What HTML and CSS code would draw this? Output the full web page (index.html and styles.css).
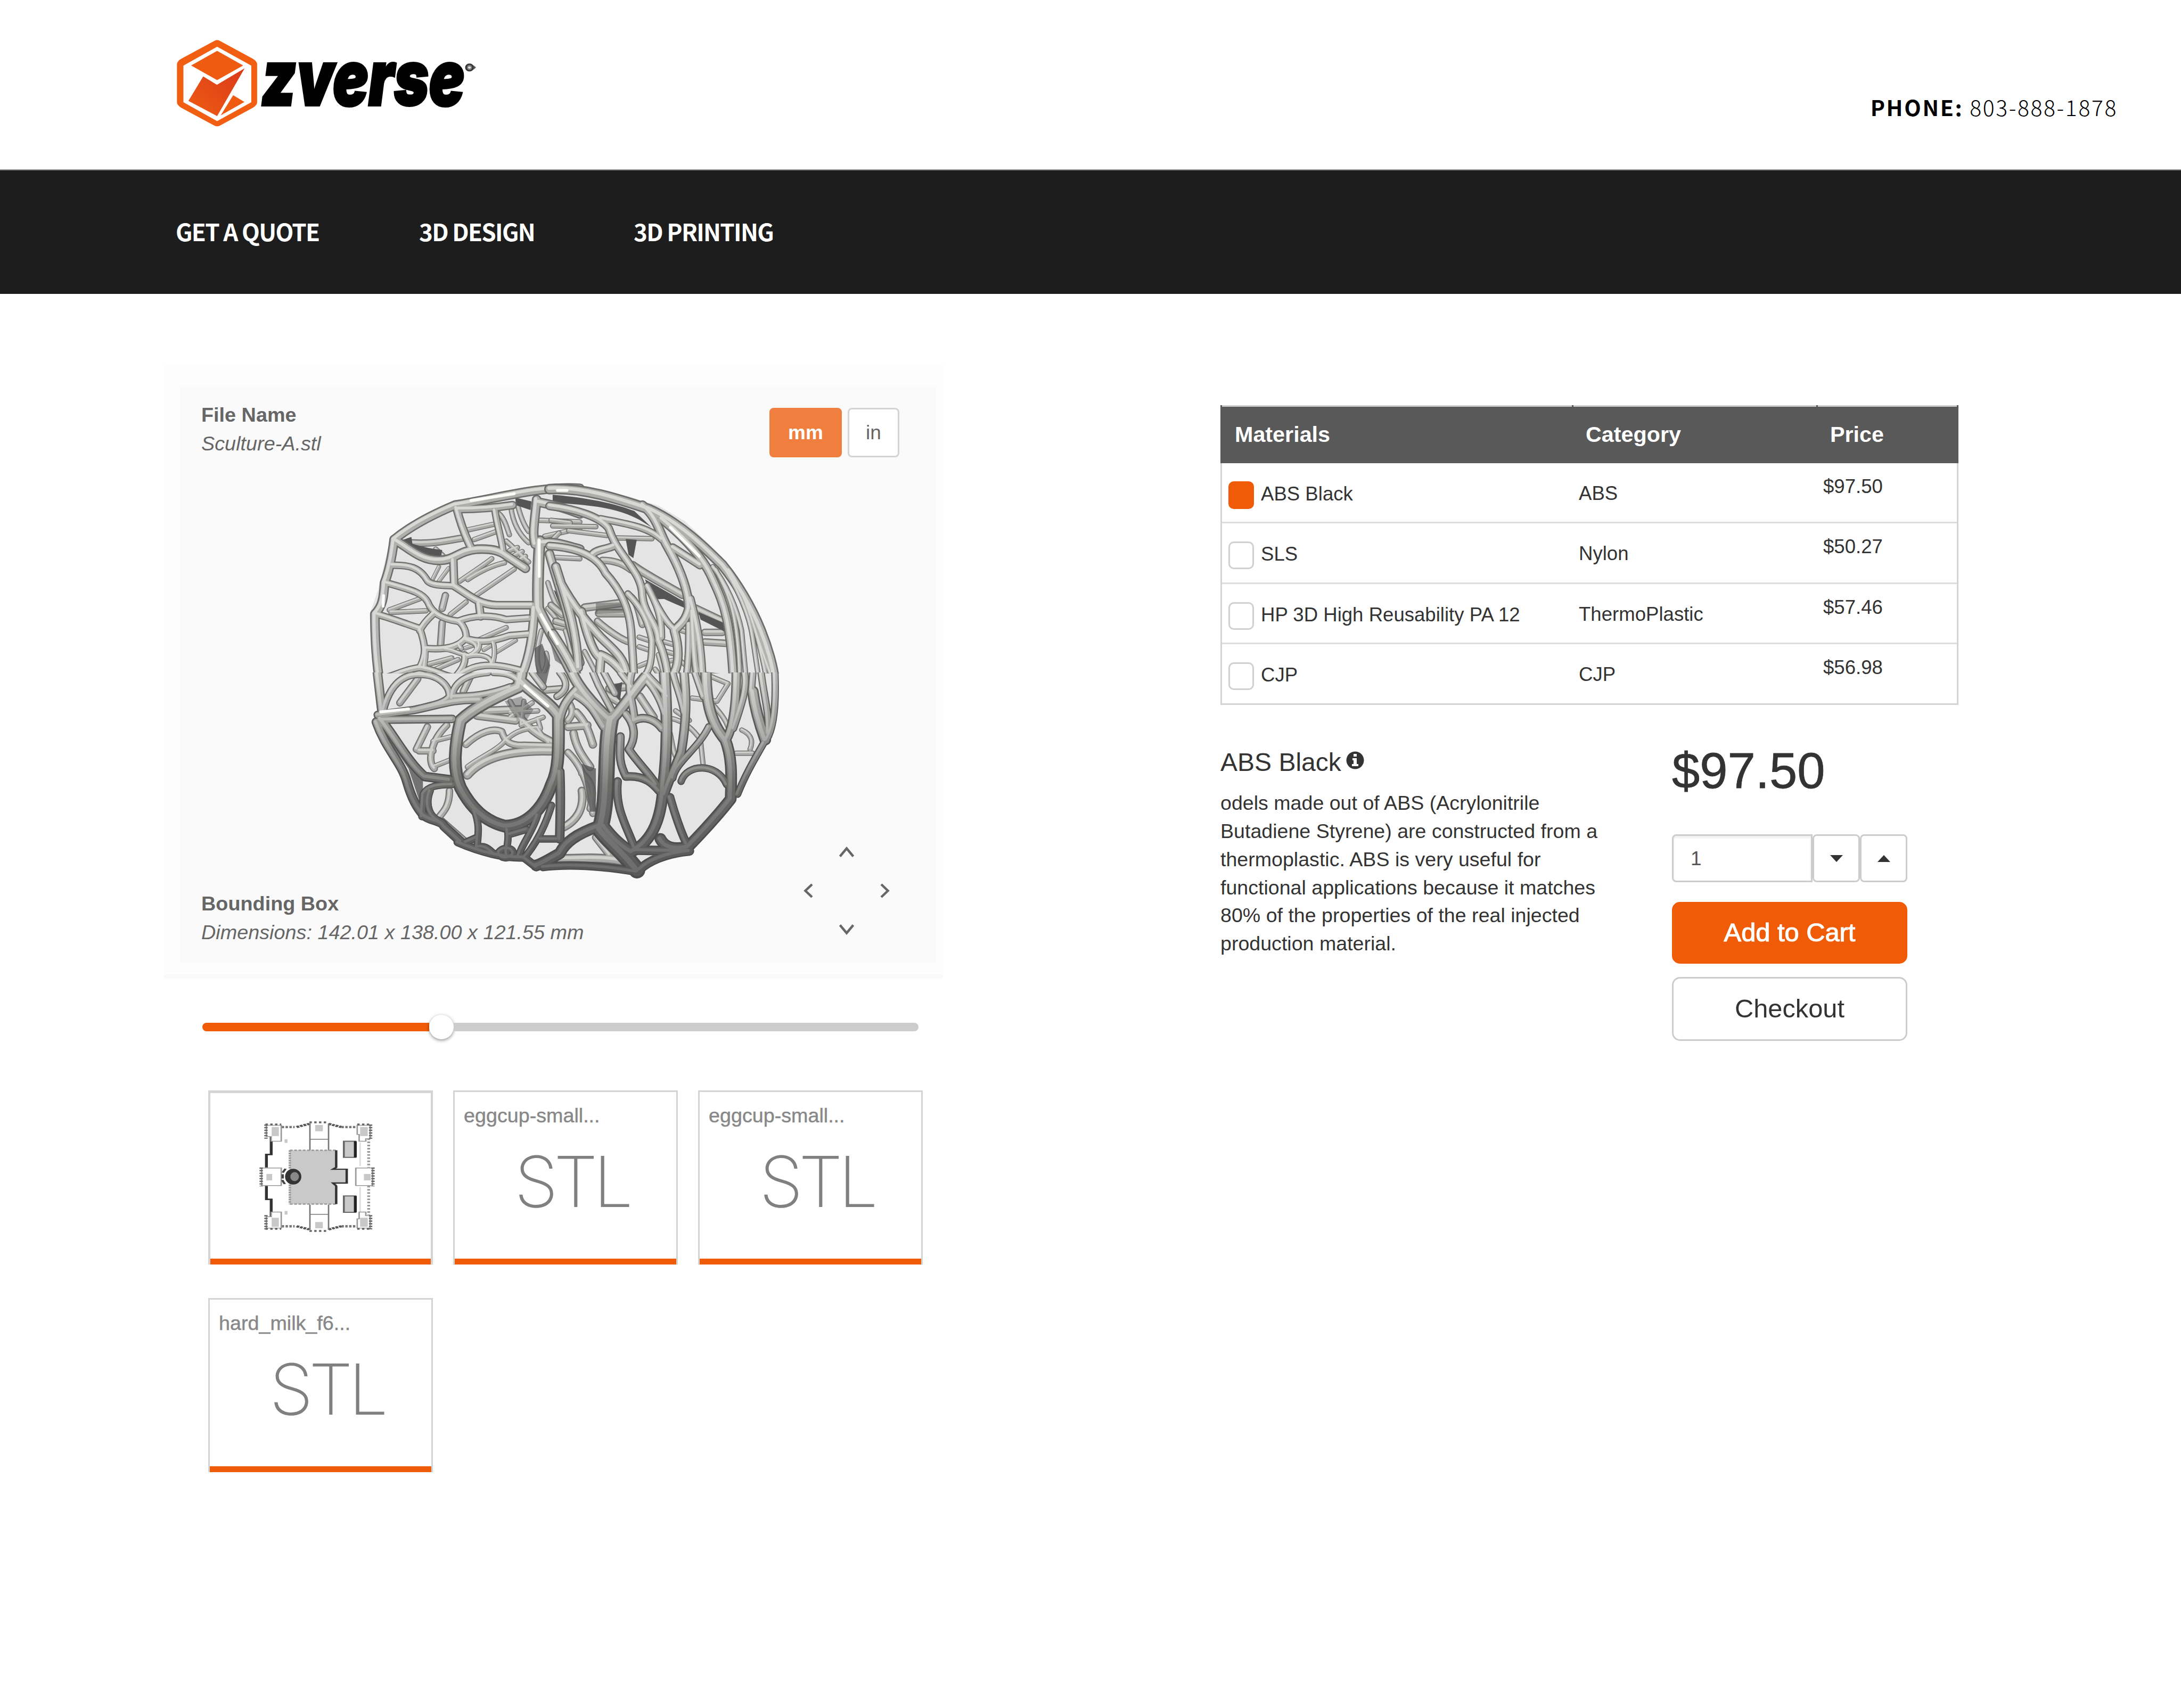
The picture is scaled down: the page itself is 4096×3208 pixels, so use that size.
FILE: index.html
```html
<!DOCTYPE html>
<html lang="en">
<head>
<meta charset="utf-8">
<title>ZVerse</title>
<link rel="stylesheet" href="styles.css">
</head>
<body>
<header class="site-header">
  <svg class="logo" viewBox="60 66 1450 550" preserveAspectRatio="none">
    <defs>
      <linearGradient id="ember" x1="0" y1="1" x2="1" y2="0"><stop offset="0" stop-color="#ef5c11"/><stop offset="1" stop-color="#d9391c"/></linearGradient>
    </defs>
    <path fill="#f15e12" fill-rule="evenodd" d="M246 75Q259 66 272 75L430 187Q451 203 451 222V460Q451 478 430 494L272 606Q259 615 246 606L87 494Q66 478 66 460V222Q66 203 87 187ZM259 112L97 230V459L259 578L423 459V230Z"/>
    <path fill="#ef5c11" d="M259 138L384 229L259 321L134 229Z"/>
    <path fill="url(#ember)" d="M192 298L258 350L391 247L259 546L121 451Z"/>
    <path fill="#ef5c11" d="M336 415L390 458L276 542Z"/>
    <text class="logo-word" x="472" y="481" textLength="975" lengthAdjust="spacingAndGlyphs">zverse</text>
    <ellipse cx="1471" cy="242" rx="17" ry="21" fill="#777" stroke="#333" stroke-width="8"/>
    <circle cx="1471" cy="242" r="7" fill="#ddd"/>
    <path fill="#555" d="M1490 228L1502 242L1490 256Z"/>
  </svg>
  <p class="phone"><b>PHONE:</b> 803-888-1878</p>
</header>

<nav class="main-nav">
  <a class="nav-quote">GET A QUOTE</a>
  <a class="nav-design">3D DESIGN</a>
  <a class="nav-printing">3D PRINTING</a>
</nav>

<main class="page">
  <section class="model">
    <div class="viewer">
      <div class="stage">
        <svg class="sculpture" viewBox="740 980 900 860">
          <defs>
            <clipPath id="upper"><rect x="740" y="980" width="900" height="422"/></clipPath>
            <clipPath id="lower"><rect x="740" y="1400" width="900" height="440"/></clipPath>
            <linearGradient id="toneA" gradientUnits="userSpaceOnUse" x1="0" y1="0" x2="0" y2="1320"><stop offset="0" stop-color="#acacaa"/><stop offset="1" stop-color="#b4b4b2"/></linearGradient>
            <linearGradient id="toneB" gradientUnits="userSpaceOnUse" x1="0" y1="0" x2="0" y2="1260"><stop offset="0" stop-color="#b4b4b2"/><stop offset=".3" stop-color="#949492"/><stop offset=".55" stop-color="#6a6a69"/><stop offset="1" stop-color="#585858"/></linearGradient>
            <linearGradient id="shineB" gradientUnits="userSpaceOnUse" x1="0" y1="0" x2="0" y2="1260"><stop offset="0" stop-color="#d8d8d6"/><stop offset=".3" stop-color="#b0b0ae"/><stop offset=".6" stop-color="#7c7c7b"/><stop offset="1" stop-color="#6c6c6c"/></linearGradient>
            <linearGradient id="edgeB" gradientUnits="userSpaceOnUse" x1="0" y1="0" x2="0" y2="1260"><stop offset="0" stop-color="#6b6b6a"/><stop offset=".4" stop-color="#505050"/><stop offset="1" stop-color="#4c4c4c"/></linearGradient>

            <g id="backLeft" transform="translate(740 980) scale(.33333)">
              <path class="t w4" d="M340 450C470 460 560 440 670 420"/>
              <path class="t w3" d="M700 370L860 335M740 430L880 380M500 490L545 530"/>
              <path class="t w3" d="M650 690C750 620 800 590 850 550M700 680C790 620 860 590 930 575"/>
              <path class="t w3" d="M750 780L990 615M210 870L400 800M220 885L440 875"/>
              <path class="t w4" d="M540 950L530 1090M560 780L540 860"/>
              <path class="t w3" d="M590 900L690 820M760 1060L940 980M450 1210L600 1170M500 1240L640 1180"/>
              <path class="t w2" d="M870 1140L1000 1060M480 680L520 600M520 690L580 610M680 1110L740 1090M800 1120L850 1090"/>
              <path class="t w3" d="M880 260C930 280 950 380 960 400M940 440C1000 490 1040 540 1080 570M960 500L1010 480M990 530L1040 505M1020 560L1060 535"/>
              <path class="t w3" d="M970 230C980 320 1020 400 1080 450M1010 210C1030 290 1050 340 1080 380M1150 310L1400 320M1180 410L1400 360M1210 540L1400 550"/>
              <path class="t w3" d="M1200 700C1230 800 1260 870 1300 900M1200 860L1290 970M1160 1000C1130 1100 1120 1200 1160 1280M1230 970L1330 990M1190 1140C1210 1200 1180 1260 1150 1290"/>
            </g>
            <g id="backRight" transform="translate(1150 980) scale(.33333)">
              <path class="t w3" d="M-10 310L110 325M0 345L270 350M100 375L340 405M40 390L0 430M380 420L620 425"/>
              <path class="t w4" d="M310 560C400 560 450 590 490 620"/>
              <path class="t w5" d="M200 855L440 825M290 890L460 890"/>
              <path class="t w5" d="M500 590C580 650 700 710 810 775M890 860L1080 950"/>
              <path class="t w4" d="M950 1070L1105 1080M950 1010L1060 1010M960 1280L1130 1300"/>
              <path class="t w4" d="M480 780C540 830 540 900 560 960M280 940C360 1010 440 1060 480 1070M-10 840L60 900M20 940L90 960"/>
              <path class="t w3" d="M540 1040L600 1060M540 1100L600 1120M700 1070L770 1090M710 1130L780 1150M720 1190L780 1180M540 1220L590 1200M660 1150L690 1260M840 1160L870 1290M800 1190L850 1230"/>
              <path class="t w3" d="M80 1000C120 1100 110 1200 180 1320M200 1130L300 1320M780 990L840 1010M380 1180L480 1300M640 1240L700 1320"/>
            </g>
            <g id="backLow" transform="translate(740 1400) scale(.57407 .33333)">
              <path class="t w4" d="M225 40L160 190M420 10L390 120M260 340L220 480M330 330C270 430 260 560 285 600M230 490L280 490"/>
              <path class="t w4" d="M400 450C450 370 500 345 530 370C540 430 560 460 610 455L715 460"/>
              <path class="t w6" d="M405 640C460 530 560 480 720 490"/>
              <path class="t w3" d="M540 430C570 380 600 350 660 345C670 390 690 420 700 440M405 590C450 530 510 490 540 430M280 590L345 545M280 430L350 400"/>
              <path class="t w5" d="M600 290C640 370 680 410 720 440M440 270L580 300M470 240L600 230"/>
              <path class="t w3" d="M560 180L600 300M610 180L600 320M640 190L560 280M660 240L560 250M680 280L600 330M670 350L660 290"/>
              <path class="t w5" d="M770 340L840 330M790 380C800 480 830 540 850 590M800 250C840 320 850 400 860 450"/>
              <path class="t w4" d="M770 500C830 600 850 750 860 880M820 630C870 700 860 780 850 850M690 110L760 100M770 180C790 230 790 260 770 300"/>
              <path class="t w3" d="M1250 420L1260 580M1160 240L1210 300M1290 190C1320 250 1340 290 1350 340M1400 360C1440 390 1440 440 1430 480M1380 505L1440 505"/>
              <path class="t w3" d="M1280 20L1350 70L1310 180L1220 160M1150 290C1200 310 1230 370 1250 420M1140 380C1150 450 1150 500 1165 540"/>
              <path class="t w5" d="M820 740C830 850 800 930 750 970M920 100L980 90M910 140L960 190M1030 150L1080 280"/>
              <path class="t w4" d="M870 1030L920 1140M880 1020L945 1150M340 740C340 850 310 880 300 910L400 1060"/>
              <path class="t w6" d="M710 1165C800 1165 880 1150 960 1175"/>
            </g>

            <g id="frontLeft" transform="translate(740 980) scale(.33333)">
              <path class="t w4" d="M230 590C330 590 400 600 450 690C480 720 560 715 620 720M870 250C880 330 910 420 920 500M190 700C330 740 420 760 450 820C480 900 560 930 640 940C740 900 850 900 940 930L1080 920"/>
              <path class="t w4" d="M130 895C250 930 350 970 400 985C440 1100 440 1150 400 1230M400 1000C430 940 470 910 490 890M440 1110C560 1120 650 1100 690 1040C690 990 660 950 640 940M690 1050C800 1080 870 1060 960 1030L1080 1020"/>
              <path class="t w3" d="M690 1060C780 1080 770 1130 710 1155C650 1150 620 1120 560 1115M770 1070C780 1100 770 1130 720 1150M860 1075C870 1110 870 1180 850 1210M700 1160C780 1140 850 1160 850 1210M660 1110C640 1090 640 1070 690 1050M430 1230C440 1170 440 1130 440 1110"/>
              <path class="t w4" d="M150 1300C230 1290 300 1240 400 1230C500 1240 560 1290 620 1290C680 1260 720 1215 840 1215C930 1215 1000 1240 1040 1250M680 1150C690 1200 660 1250 620 1290"/>
              <path class="t w5" d="M630 235C655 330 690 420 720 480M640 240C760 240 850 235 980 215M610 560L615 720C700 770 760 835 880 840L1100 840M770 830L780 910"/>
              <path class="t w6" d="M1400 110C1150 95 900 170 620 215C500 265 350 340 240 430C330 480 400 560 520 560C620 560 640 500 760 490C850 485 900 500 940 530L1060 610"/>
              <path class="t w6" d="M240 430C225 550 200 650 180 700C175 800 165 850 120 895C120 1050 130 1200 150 1320"/>
              <path class="t w6" d="M1130 180C1120 300 1100 390 1120 460M1130 195C1250 215 1320 240 1400 270M1170 450C1250 440 1320 470 1400 490M1210 520C1260 700 1300 800 1330 930L1400 1200"/>
              <path class="t w6" d="M1115 860C1110 1000 1090 1150 1040 1270L990 1320M1040 1270L1080 1340"/>
              <path class="t w8" d="M1150 440C1140 560 1135 750 1140 860C1200 990 1300 1150 1380 1320"/>
            </g>
            <g id="frontRight" transform="translate(1150 980) scale(.33333)">
              <path class="t w3" d="M1000 600C1080 700 1150 850 1180 1000L1210 1320M1050 580C1150 720 1230 900 1250 1050L1290 1320M1100 620C1200 750 1280 1000 1340 1320M1020 620C1110 790 1160 900 1170 1320M1150 700C1250 900 1290 1100 1380 1320"/>
              <path class="t w4" d="M870 880C880 1050 880 1200 910 1320M850 960C850 1080 850 1200 830 1320M590 720C660 850 680 920 680 1040M620 780C680 900 720 960 760 990"/>
              <path class="t w4" d="M470 770C560 860 600 950 620 1060C620 1180 610 1250 560 1300M300 300C450 330 600 350 680 430M760 1250L800 1320M760 1250L730 1320"/>
              <path class="t w5" d="M-20 220C150 240 300 290 350 360C380 450 420 500 470 570C520 640 560 700 560 780C570 900 660 960 660 1060C700 1150 720 1250 720 1320"/>
              <path class="t w5" d="M860 800C900 950 930 1100 935 1320M250 520C280 490 340 490 380 470M750 480L920 590"/>
              <path class="t w6" d="M20 600C100 850 150 1000 160 1230M180 880C220 1050 260 1150 300 1170L290 1320M300 1150C380 1180 430 1250 480 1320M50 700C150 880 230 960 300 1040C380 1120 440 1160 460 1260"/>
              <path class="t w5" d="M-20 470C150 480 280 530 330 640C440 760 480 880 490 1000L510 1320"/>
              <path class="t w6" d="M560 215C660 300 660 380 720 480C800 620 850 760 850 860C830 950 780 970 760 1000C790 1100 790 1200 760 1260"/>
              <path class="t w6" d="M680 300C850 440 950 560 1000 680C1080 850 1110 950 1130 1320"/>
              <path class="t w7" d="M-20 115C200 105 420 180 600 240C800 330 960 490 1060 590C1150 700 1240 850 1300 1000C1340 1100 1380 1230 1385 1320"/>
              <path class="t w7" d="M0 1020C80 1140 130 1230 170 1330"/>
            </g>
            <g id="frontLow" transform="translate(740 1400) scale(.57407 .33333)">
              <path class="t w4" d="M100 240C120 100 160 12 230 12C300 12 340 80 340 150C320 200 250 210 210 235M350 160C350 80 390 10 480 0M500 0C560 0 580 30 590 50M350 150C420 150 480 140 560 90M640 0L680 90M740 0C770 60 770 110 730 150"/>
              <path class="t w4" d="M1480 440C1440 560 1410 650 1385 760M1280 340C1240 480 1160 560 1150 660M1180 680C1200 570 1310 560 1345 700M1440 0L1435 110M1520 0C1525 200 1515 350 1490 420M1410 0C1420 100 1400 200 1370 350M1470 0C1480 150 1500 250 1495 380"/>
              <path class="t w4" d="M1050 0C1090 80 1120 120 1130 150M1150 0C1160 80 1180 150 1190 250M860 0L880 80L930 240M1230 0L1260 150M1060 60C1090 120 1110 200 1120 260M900 0L940 130M960 0L1000 90"/>
              <path class="t w5" d="M980 260C1010 320 1020 400 990 480C1030 580 1060 620 1090 700M1010 300C1050 265 1090 300 1110 350M960 400C960 500 950 550 980 650C1050 640 1080 700 1100 740M950 680C940 850 980 950 1010 1090M1140 780C1160 900 1180 1000 1200 1070M1000 0C980 120 1010 200 1010 300"/>
              <path class="t w4" d="M350 700C300 700 260 710 245 760L240 900M270 740C250 830 270 900 300 925M430 860C450 950 445 1000 440 1090C470 1080 480 1100 500 1130M550 980C560 1060 540 1100 550 1150M660 890C640 1000 600 1080 590 1150M710 830C680 1000 640 1100 610 1160M670 1040L730 1040M520 1120C540 1080 580 1100 570 1140C550 1170 520 1160 520 1120M400 1060L440 1030M560 1010L620 980"/>
              <path class="t w5" d="M80 265L210 235C300 205 350 165 450 170M90 295L350 290M680 1215C780 1195 900 1210 1020 1245M370 1060C450 1120 540 1160 610 1155L655 1215"/>
              <path class="t w6" d="M78 -10L95 240M90 290C150 420 190 560 250 650L340 670M75 310C110 480 165 560 185 680C205 800 225 850 245 890C270 930 310 920 320 960L380 1055"/>
              <path class="t w6" d="M740 620C745 800 740 950 740 1040M800 110C760 180 750 220 740 290M800 140C860 200 870 260 900 340M1190 0C1200 150 1200 300 1180 500C1150 620 1130 700 1120 760M1380 0C1380 200 1370 350 1340 430M1030 1230C1060 1180 1120 1130 1210 1115L1010 1110"/>
              <path class="t w8" d="M1440 120C1450 250 1470 350 1485 420M780 -20C800 80 860 200 925 300C980 200 1000 130 1050 30M1270 0C1270 150 1280 300 1340 420C1370 550 1360 700 1360 790C1310 900 1250 1010 1205 1090C1150 1110 1120 1090 1105 1040"/>
              <path class="t w8" d="M1120 0C1130 300 1130 500 1115 700C1110 900 1080 1050 1000 1120C960 1080 930 1030 900 960M880 960C800 1010 760 1060 740 1130C700 1170 670 1200 655 1205"/>
              <path class="t w9" d="M600 10L590 90C500 160 430 220 380 300C360 450 350 600 380 720C420 850 470 930 540 960C620 960 680 850 710 700C740 600 735 450 735 270C700 180 640 130 595 50"/>
              <path class="t w10" d="M925 290C900 500 920 800 885 980C920 1060 970 1120 1020 1235"/>
            </g>
          </defs>
          <path fill="#e4e4e4" d="M1181 1006L1306 1033L1371 1053L1425 1085L1479 1136L1533 1199L1566 1262L1593 1329L1618 1388L1618 1447L1600 1542L1535 1660L1436 1773L1390 1782L1330 1818L1240 1804L1120 1808L1090 1788L1010 1775L952 1755L912 1713L875 1690L845 1630L780 1510L776 1497L790 1472L776 1400L769 1279L786 1230L810 1130L825 1113L948 1051L1090 1018Z"/>
          <g class="layer back"><g clip-path="url(#upper)"><use href="#backLeft" class="edge"/><use href="#backLeft" class="body"/><use href="#backLeft" class="shine" x="-1" y="-2"/><use href="#backRight" class="edge"/><use href="#backRight" class="body"/><use href="#backRight" class="shine" x="-1" y="-2"/></g><g clip-path="url(#lower)"><use href="#backLow" class="edge"/><use href="#backLow" class="body"/><use href="#backLow" class="shine" x="-1" y="-2"/></g></g>
          <g fill="#555">
            <path d="M1342 1206L1358 1248L1382 1247L1425 1266L1424 1253Z"/><path d="M1453 1274L1513 1300L1514 1318L1458 1290Z"/><path d="M1302 1122L1325 1124L1318 1162L1308 1155Z"/>
            <path d="M1150 1030C1200 1034 1270 1044 1320 1064L1356 1098L1330 1082C1270 1050 1200 1052 1150 1046Z"/>
            <path d="M1072 1036L1106 1044L1104 1062L1074 1052Z"/><path d="M835 1125L856 1118L858 1132Q890 1142 920 1145L918 1158Q890 1158 870 1148Z"/><path d="M1152 1228L1180 1250L1190 1310L1176 1290Z"/><path d="M1240 1256L1290 1254L1300 1276L1240 1278Z" opacity=".5"/>
            <path d="M1112 1350L1128 1340L1145 1385L1136 1425L1118 1410Z" opacity=".75"/><path d="M1140 1320L1170 1360L1178 1390L1155 1375Z" opacity=".6"/>
            <path d="M1050 1460L1085 1450L1110 1478L1095 1500L1070 1490Z" opacity=".45"/><path d="M1265 1430L1295 1420L1290 1460Z"/><path d="M780 1500L810 1510L880 1620L880 1690L850 1600Z" opacity=".8"/><path d="M1210 1590L1240 1600L1240 1690L1228 1690Z" opacity=".8"/>
          </g>
          <g class="layer" clip-path="url(#upper)"><use href="#frontLeft" class="edge"/><use href="#frontLeft" class="body"/><use href="#frontLeft" class="shine" x="-2" y="-2"/><use href="#frontRight" class="edge"/><use href="#frontRight" class="body"/><use href="#frontRight" class="shine" x="-1" y="-2"/></g>
          <g class="layer low" clip-path="url(#lower)"><use href="#frontLow" class="edge"/><use href="#frontLow" class="body"/><use href="#frontLow" class="shine" x="-2" y="-1"/></g>
          <g fill="none" stroke="#fbfbfa" stroke-linecap="round" stroke-width="6">
            <path d="M1122 1125V1200M1126 1280L1160 1340M980 1042L1070 1028M1160 1021H1180M1395 1098L1455 1158M1092 1428L1140 1470M792 1482L850 1476M798 1240L797 1262"/>
          </g>
        </svg>
        <div class="stage-row">
          <dl class="fact"><dt>File Name</dt><dd>Sculture-A.stl</dd></dl>
          <div class="units"><button class="unit active">mm</button><button class="unit">in</button></div>
        </div>
        <div class="stage-row bottom">
          <dl class="fact"><dt>Bounding Box</dt><dd>Dimensions: 142.01 x 138.00 x 121.55 mm</dd></dl>
          <svg class="rotate" viewBox="0 0 180 180">
            <path d="M77.500 25.500L90 10.500L102.500 25.500M25 78L12.500 90L25 102M155 78L167.500 90L155 102M77.500 154.500L90 169.500L102.500 154.500"/>
          </svg>
        </div>
      </div>
    </div>

    <div class="slider"><div class="fill"></div><div class="thumb"></div><div class="rest"></div></div>

    <div class="files">
      <div class="file selected">
        <svg class="plan" viewBox="140 160 244 442" preserveAspectRatio="none">
          <g fill="none" stroke="#888" stroke-width="3">
            <path d="M188 192H215M313 192H345M188 568H215M313 568H345" stroke="#777" stroke-width="9" stroke-dasharray="5 3"/>
            <path d="M219 192L246 180M286 180L313 192M219 568L246 580M286 580L313 568" stroke="#555" stroke-width="8" stroke-dasharray="6 2"/>
            <path d="M370 235V345M370 415V525" stroke="#999" stroke-width="6" stroke-dasharray="6 6"/>
            <path d="M352 250V340M352 420V515" stroke="#ddd"/>
            <path d="M166 228V296H156V345M156 415V466H166V532" stroke="#333" stroke-width="6"/>
            <path d="M247 178V282M286 178V282M247 238H286M247 486V582M286 486V582M247 523H286" stroke="#777"/>
          </g>
          <g fill="#fff" stroke="#999" stroke-width="3">
            <path d="M156 185H187V246H166V228H156ZM346 185H373V236H364V246H350V220H346ZM156 575H187V514H166V532H156ZM346 575H373V528H364V514H350V540H346Z"/>
            <path d="M146 347H187V414H146ZM343 347H378V414H343Z"/>
          </g>
          <path d="M154 182H187M346 182H375M154 578H187M346 578H375M145 345V417M379 345V417M246 174H286M246 586H286M155 182V236M155 526V580M374 182V236M374 526V580" fill="none" stroke="#666" stroke-width="7" stroke-dasharray="5 5"/>
          <path fill="#c8c8c8" d="M167 192H182V226H167ZM352 192H368V226H352ZM167 536H182V570H167ZM352 536H368V570H352ZM258 184H274V208H258ZM258 552H274V576H258ZM156 370H168V394H156ZM360 370H374V394H360ZM194 238H200V252H194ZM194 510H200V524H194Z"/>
          <path fill="#c9c9c9" d="M205 280H303V355H325V404H303V484H205Z"/>
          <path d="M205 280H303M205 484H303M205 280V350M205 410V484" fill="none" stroke="#999" stroke-width="5" stroke-dasharray="6 3"/>
          <path d="M302 280V345L295 352H324V404H295L302 415V484" fill="none" stroke="#333" stroke-width="5"/>
          <path fill="#c9c9c9" stroke="#666" stroke-width="4" d="M318 246H342V307H318ZM318 453H342V515H318Z"/>
          <path d="M342 246V307M342 453V515" stroke="#222" stroke-width="6"/>
          <ellipse cx="212" cy="380" rx="17" ry="30" fill="#333"/><ellipse cx="215" cy="380" rx="9" ry="17" fill="#888"/>
          <path d="M196 350L190 365V396L196 412" fill="none" stroke="#444" stroke-width="5" stroke-dasharray="16 6"/>
        </svg>
      </div>
      <div class="file"><span class="file-name">eggcup-small...</span><span class="file-type">STL</span></div>
      <div class="file"><span class="file-name">eggcup-small...</span><span class="file-type">STL</span></div>
      <div class="file"><span class="file-name">hard_milk_f6...</span><span class="file-type">STL</span></div>
    </div>
  </section>

  <section class="order">
    <div class="materials">
      <div class="row head"><span>Materials</span><span>Category</span><span>Price</span></div>
      <div class="row"><span class="name"><i class="check on"></i>ABS Black</span><span class="cat">ABS</span><span class="cost">$97.50</span></div>
      <div class="row"><span class="name"><i class="check"></i>SLS</span><span class="cat">Nylon</span><span class="cost">$50.27</span></div>
      <div class="row"><span class="name"><i class="check"></i>HP 3D High Reusability PA 12</span><span class="cat">ThermoPlastic</span><span class="cost">$57.46</span></div>
      <div class="row"><span class="name"><i class="check"></i>CJP</span><span class="cat">CJP</span><span class="cost">$56.98</span></div>
    </div>
    <div class="details">
      <div class="about">
        <h2>ABS Black<svg class="info" viewBox="0 0 34 34"><circle cx="17" cy="17" r="16.500" fill="#333"/><path fill="#fff" d="M14 5H20V10H14ZM12 13H20V24H23V28H11V24H14V17H12Z"/></svg></h2>
        <p>odels made out of ABS (Acrylonitrile<br>Butadiene Styrene) are constructed from a<br>thermoplastic. ABS is very useful for<br>functional applications because it matches<br>80% of the properties of the real injected<br>production material.</p>
      </div>
      <div class="buy">
        <div class="total">$97.50</div>
        <div class="qty">
          <div class="qty-value">1</div>
          <button class="step"><svg viewBox="0 0 24 13"><path d="M0 0H24L12 13Z"/></svg></button>
          <button class="step"><svg viewBox="0 0 24 13"><path d="M0 13H24L12 0Z"/></svg></button>
        </div>
        <button class="cta primary">Add to Cart</button>
        <button class="cta">Checkout</button>
      </div>
    </div>
  </section>
</main>
</body>
</html>
```

FILE: styles.css
```css
* { box-sizing: border-box; margin: 0; padding: 0; }
body { width: 4096px; min-height: 3208px; background: #fff; color: #333; font-family: "Liberation Sans", Arial, sans-serif; font-size: 37px; }
button { font: inherit; color: inherit; background: #fff; }
svg { display: block; }

.site-header { display: flex; justify-content: space-between; height: 320px; padding: 74px 119px 0 330px; border-bottom: 2px solid #8a8a8a; }
.logo { width: 567px; height: 165px; overflow: visible; }
.logo-word { font-family: Inter, "Liberation Sans", sans-serif; font-weight: 900; font-style: italic; font-size: 485px; stroke: #000; stroke-width: 14px; fill: #000; }
.phone { margin-top: 96px; height: 60px; line-height: 60px; font-family: "Noto Sans CJK SC", "Noto Sans", sans-serif; font-weight: 300; font-size: 41px; letter-spacing: 2.6px; color: #000; white-space: nowrap; }
.phone b { font-weight: 700; }

.main-nav { display: flex; height: 232px; padding: 0 0 0 330px; background: #1d1d1d; color: #fff; font-family: "Noto Sans CJK SC", "Noto Sans", sans-serif; font-weight: 700; font-size: 44px; letter-spacing: -1.7px; line-height: 229px; white-space: nowrap; }
.nav-quote { width: 457px; }
.nav-design { width: 403px; }

.page { display: flex; gap: 521px; padding: 134px 0 0 308px; }
.model { width: 1463px; }
.viewer { height: 1152px; padding: 39px 13px 0 31px; background: #fdfdfd; border-bottom: 8px solid #fafafa; }
.stage { position: relative; display: flex; flex-direction: column; justify-content: space-between; width: 1419px; height: 1083px; padding: 41px 69px 23px 39px; background: #fafafa; }
.stage-row { position: relative; display: flex; justify-content: space-between; }
.stage-row.bottom { align-items: flex-end; padding-right: 9px; }
.fact { font-size: 37.8px; line-height: 54px; color: #666; margin-top: -14px; }
.fact dt { font-weight: 700; }
.fact dd { font-style: italic; }
.bottom .fact { margin-bottom: 7px; }
.units { display: flex; gap: 11px; }
.unit { width: 97px; height: 93px; border: 3px solid #d3d3d3; border-radius: 8px; color: #666; font-size: 37px; }
.unit.active { width: 136px; border-color: #f07f3f; background: #f07f3f; color: #fff; font-weight: 700; }
.rotate { width: 180px; height: 180px; margin-bottom: 22px; }
.rotate path { fill: none; stroke: #666; stroke-width: 4.5; }

.sculpture { position: absolute; left: 329px; top: 159px; width: 812px; height: 776px; }
.t { vector-effect: non-scaling-stroke; fill: none; stroke-linecap: round; stroke-linejoin: round; stroke-width: calc((var(--w) * var(--k) + var(--e)) * 1px); }
.w2 { --w: 7; } .w3 { --w: 9; } .w4 { --w: 13; } .w5 { --w: 15; } .w6 { --w: 17; } .w7 { --w: 19; } .w8 { --w: 21; } .w9 { --w: 23; } .w10 { --w: 30; }
.edge { --k: 1; --e: 1; stroke: #6b6b6a; }
.body { --k: .76; --e: 0; stroke: url(#toneA); }
.shine { --k: .34; --e: 0; stroke: #d8d8d6; }
.back .edge { stroke: #747473; }
.back .body { stroke: #a9a9a7; }
.back .shine { stroke: #cfcfcd; }
.low .edge { stroke: url(#edgeB); }
.low .body { stroke: url(#toneB); }
.low .shine { stroke: url(#shineB); }

.slider { display: flex; align-items: center; height: 46px; margin: 68px 46px 0 72px; }
.slider .fill { width: 426px; height: 16px; border-radius: 8px 0 0 8px; background: #f05b07; }
.slider .rest { flex: 1; height: 16px; border-radius: 0 8px 8px 0; background: #ccc; }
.slider .thumb { width: 46px; height: 46px; border-radius: 50%; background: #fff; box-shadow: 0 2px 6px rgba(0,0,0,.45); }

.files { display: grid; grid-template-columns: repeat(3, 422px); gap: 63px 38px; margin: 96px 0 0 83px; }
.file { display: flex; flex-direction: column; height: 327px; padding: 23px 0 0 17px; border: 3px solid #d4d4d4; border-bottom: 0; background: linear-gradient(#f05b07, #f05b07) bottom / 100% 11px no-repeat; color: #888; font-size: 37.7px; }
.file.selected { padding: 48px 0 0 91px; border-width: 5px 4px 0; }
.plan { width: 219px; height: 219px; }
.file-name { line-height: 42px; -webkit-text-stroke: .5px #888; }
.file-type { padding: 37px 0 0 95px; font-family: Inter, Lato, sans-serif; font-weight: 250; font-size: 132px; line-height: 132px; letter-spacing: -8px; color: #808080; }

.order { width: 1386px; padding-top: 75px; }
.materials { border: 3px solid #d4d4d4; border-top: 0; }
.row { display: grid; grid-template-columns: 671px 459px 1fr; height: 113.4px; font-size: 36.6px; border-bottom: 3px solid #ddd; }
.row:last-child { border-bottom: 0; height: 111px; }
.row.head {
  height: 109px; margin: 0 -3px; padding: 3px 0 0 27px; grid-template-columns: 659px 459px 1fr; border: 0; color: #fff; font-weight: 700; font-size: 41.3px; line-height: 104px;
  background:
    linear-gradient(#595959, #595959) 0 3px / 100% 106px no-repeat,
    linear-gradient(#595959, #595959) 0 0 / 3px 3px no-repeat,
    linear-gradient(#595959, #595959) 660px 0 / 3px 3px no-repeat,
    linear-gradient(#595959, #595959) 1119px 0 / 3px 3px no-repeat,
    linear-gradient(#595959, #595959) 1383px 0 / 3px 3px no-repeat,
    #cfcfcf;
}
.name { display: flex; align-items: center; padding: 3px 0 0 12px; line-height: 48px; height: 113px; }
.check { width: 48px; height: 52px; margin: 4px 13px 0 0; border: 3px solid #d0d0d0; border-radius: 10px; background: #fff; }
.check.on { border-color: #f05b07; background: #f05b07; }
.cat { line-height: 113px; margin-left: -1px; }
.cost { line-height: 88px; margin-left: -1px; }

.details { display: flex; }
.about { width: 848px; padding-top: 77px; }
.about h2 { display: flex; gap: 9px; font-weight: 400; font-size: 48px; line-height: 62px; }
.info { width: 34px; height: 34px; margin-top: 10px; }
.about p { margin-top: 19px; font-size: 37.6px; line-height: 52.8px; white-space: nowrap; }
.buy { width: 442px; padding-top: 69px; }
.total { font-size: 94px; line-height: 110px; -webkit-text-stroke: .8px #333; }
.qty { display: flex; height: 90px; margin-top: 64px; }
.qty-value { width: 264px; padding-left: 32px; border: 3px solid #ccc; border-radius: 8px 0 0 8px; line-height: 86px; box-shadow: inset 0 3px 4px rgba(0,0,0,.08); color: #555; }
.step { display: flex; align-items: center; justify-content: center; width: 89px; border: 3px solid #ccc; border-radius: 8px; }
.step svg { width: 24px; height: 13px; fill: #333; }
.cta { display: block; width: 442px; height: 120px; margin-top: 25px; padding-bottom: 3px; border: 3px solid #ccc; border-radius: 15px; font-size: 48.8px; }
.cta.primary { height: 116px; margin-top: 37px; border-color: #f05b07; background: #f05b07; color: #fff; -webkit-text-stroke: 1.2px #fff; }
```
